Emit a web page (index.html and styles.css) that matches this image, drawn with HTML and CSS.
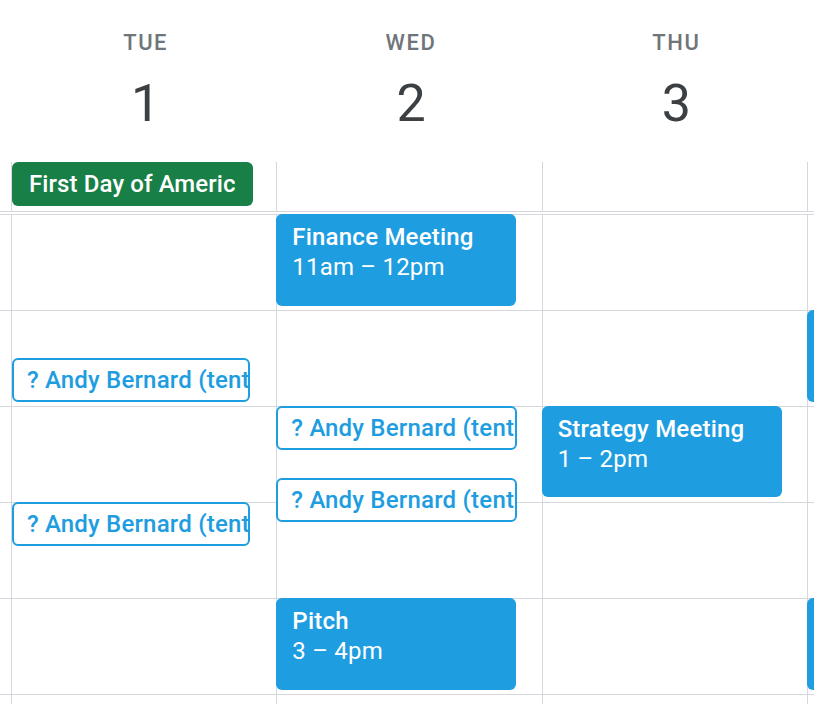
FILE: index.html
```html
<!DOCTYPE html>
<html lang="en">
<head>
<meta charset="utf-8">
<title>Week view</title>
<link rel="stylesheet" href="styles.css">
</head>
<body>
<div class="cal">
  <div class="col gutter">
    <div class="head"></div>
    <div class="allday"></div>
    <div class="hours">
      <div class="slot"></div><div class="slot"></div><div class="slot"></div>
      <div class="slot"></div><div class="slot"></div><div class="slot"></div>
    </div>
  </div>

  <div class="col day">
    <div class="head"><div class="dow">TUE</div><div class="date">1</div></div>
    <div class="allday">
      <div class="chip"><span class="chip-text">First Day of American Indian Heritage Month</span></div>
    </div>
    <div class="hours">
      <div class="slot"></div><div class="slot"></div><div class="slot"></div>
      <div class="slot"></div><div class="slot"></div><div class="slot"></div>
      <div class="event tent" style="top:144px;height:44px">? Andy Bernard (tentative)</div>
      <div class="event tent" style="top:288px;height:44px">? Andy Bernard (tentative)</div>
    </div>
  </div>

  <div class="col day">
    <div class="head"><div class="dow">WED</div><div class="date">2</div></div>
    <div class="allday"></div>
    <div class="hours">
      <div class="slot"></div><div class="slot"></div><div class="slot"></div>
      <div class="slot"></div><div class="slot"></div><div class="slot"></div>
      <div class="event" style="top:0px;height:92px">
        <div class="title">Finance Meeting</div>
        <div class="time">11am – 12pm</div>
      </div>
      <div class="event tent wide" style="top:192px;height:44px">? Andy Bernard (tentative)</div>
      <div class="event tent wide" style="top:264px;height:44px">? Andy Bernard (tentative)</div>
      <div class="event" style="top:384px;height:92px">
        <div class="title">Pitch</div>
        <div class="time">3 – 4pm</div>
      </div>
    </div>
  </div>

  <div class="col day">
    <div class="head"><div class="dow">THU</div><div class="date">3</div></div>
    <div class="allday"></div>
    <div class="hours">
      <div class="slot"></div><div class="slot"></div><div class="slot"></div>
      <div class="slot"></div><div class="slot"></div><div class="slot"></div>
      <div class="event" style="top:192px;height:91px">
        <div class="title">Strategy Meeting</div>
        <div class="time">1 – 2pm</div>
      </div>
    </div>
  </div>

  <div class="col day">
    <div class="head"><div class="dow">FRI</div><div class="date">4</div></div>
    <div class="allday"></div>
    <div class="hours">
      <div class="slot"></div><div class="slot"></div><div class="slot"></div>
      <div class="slot"></div><div class="slot"></div><div class="slot"></div>
      <div class="event" style="top:96px;height:92px">
        <div class="title">Sales Call</div>
        <div class="time">12 – 1pm</div>
      </div>
      <div class="event" style="top:384px;height:92px">
        <div class="title">Team Sync</div>
        <div class="time">3 – 4pm</div>
      </div>
    </div>
  </div>
</div>
</body>
</html>
```

FILE: styles.css
```css
html, body {
  margin: 0;
  padding: 0;
  background: #ffffff;
}

body {
  width: 814px;
  height: 704px;
  overflow: hidden;
  font-family: Roboto, "Liberation Sans", sans-serif;
}

.cal {
  display: flex;
  align-items: flex-start;
  width: 814px;
  height: 704px;
  overflow: hidden;
}

.col {
  flex: 0 0 265.33px;
  display: flex;
  flex-direction: column;
}

.gutter {
  flex: 0 0 11px;
}

.head {
  flex: 0 0 162px;
  height: 162px;
  box-sizing: border-box;
  padding-left: 4px;
  display: flex;
  flex-direction: column;
  align-items: center;
}

.dow {
  margin-top: 27px;
  font-family: "Roboto Medium", Roboto, "Liberation Sans", sans-serif;
  font-size: 22px;
  line-height: 32px;
  font-weight: 500;
  letter-spacing: 1.6px;
  color: #70757a;
}

.date {
  margin-top: 19px;
  font-size: 52px;
  line-height: 52px;
  font-weight: 400;
  color: #3c4043;
}

.allday {
  flex: 0 0 50px;
  position: relative;
  height: 50px;
  box-sizing: border-box;
  border-bottom: 1px solid #d6d7dc;
  margin-bottom: 2px;
}

.day .allday,
.day .hours {
  border-left: 1px solid #d6d7dc;
}

.hours {
  flex: 0 0 auto;
  position: relative;
}

.slot {
  height: 96px;
  box-sizing: border-box;
  border-top: 1px solid #d6d7dc;
}

.chip {
  position: absolute;
  top: 0;
  left: 0;
  width: 241px;
  height: 44px;
  box-sizing: border-box;
  padding: 0 18px 0 17px;
  border-radius: 6px;
  background: #188046;
  color: #ffffff;
  font-family: "Roboto Medium", Roboto, "Liberation Sans", sans-serif;
  font-size: 24px;
  line-height: 44px;
  font-weight: 500;
  letter-spacing: 0.1px;
}

.chip-text {
  display: block;
  overflow: hidden;
  white-space: nowrap;
}

.event {
  position: absolute;
  left: -1px;
  width: 240px;
  box-sizing: border-box;
  padding: 8px 16px;
  border-radius: 6px;
  background: #1e9de0;
  color: #ffffff;
  font-size: 24px;
  line-height: 30px;
  letter-spacing: 0.2px;
  overflow: hidden;
}

.title {
  font-family: "Roboto Medium", Roboto, "Liberation Sans", sans-serif;
  font-weight: 500;
  white-space: nowrap;
  overflow: hidden;
}

.time {
  font-weight: 400;
  white-space: nowrap;
}

.event.tent {
  left: 0;
  width: 238px;
  padding: 0 0 0 13px;
  background: #ffffff;
  border: 2px solid #1e9de0;
  color: #1e9de0;
  font-family: "Roboto Medium", Roboto, "Liberation Sans", sans-serif;
  font-weight: 500;
  line-height: 40px;
  white-space: nowrap;
}

.event.tent.wide {
  left: -1px;
  width: 241px;
}
```
